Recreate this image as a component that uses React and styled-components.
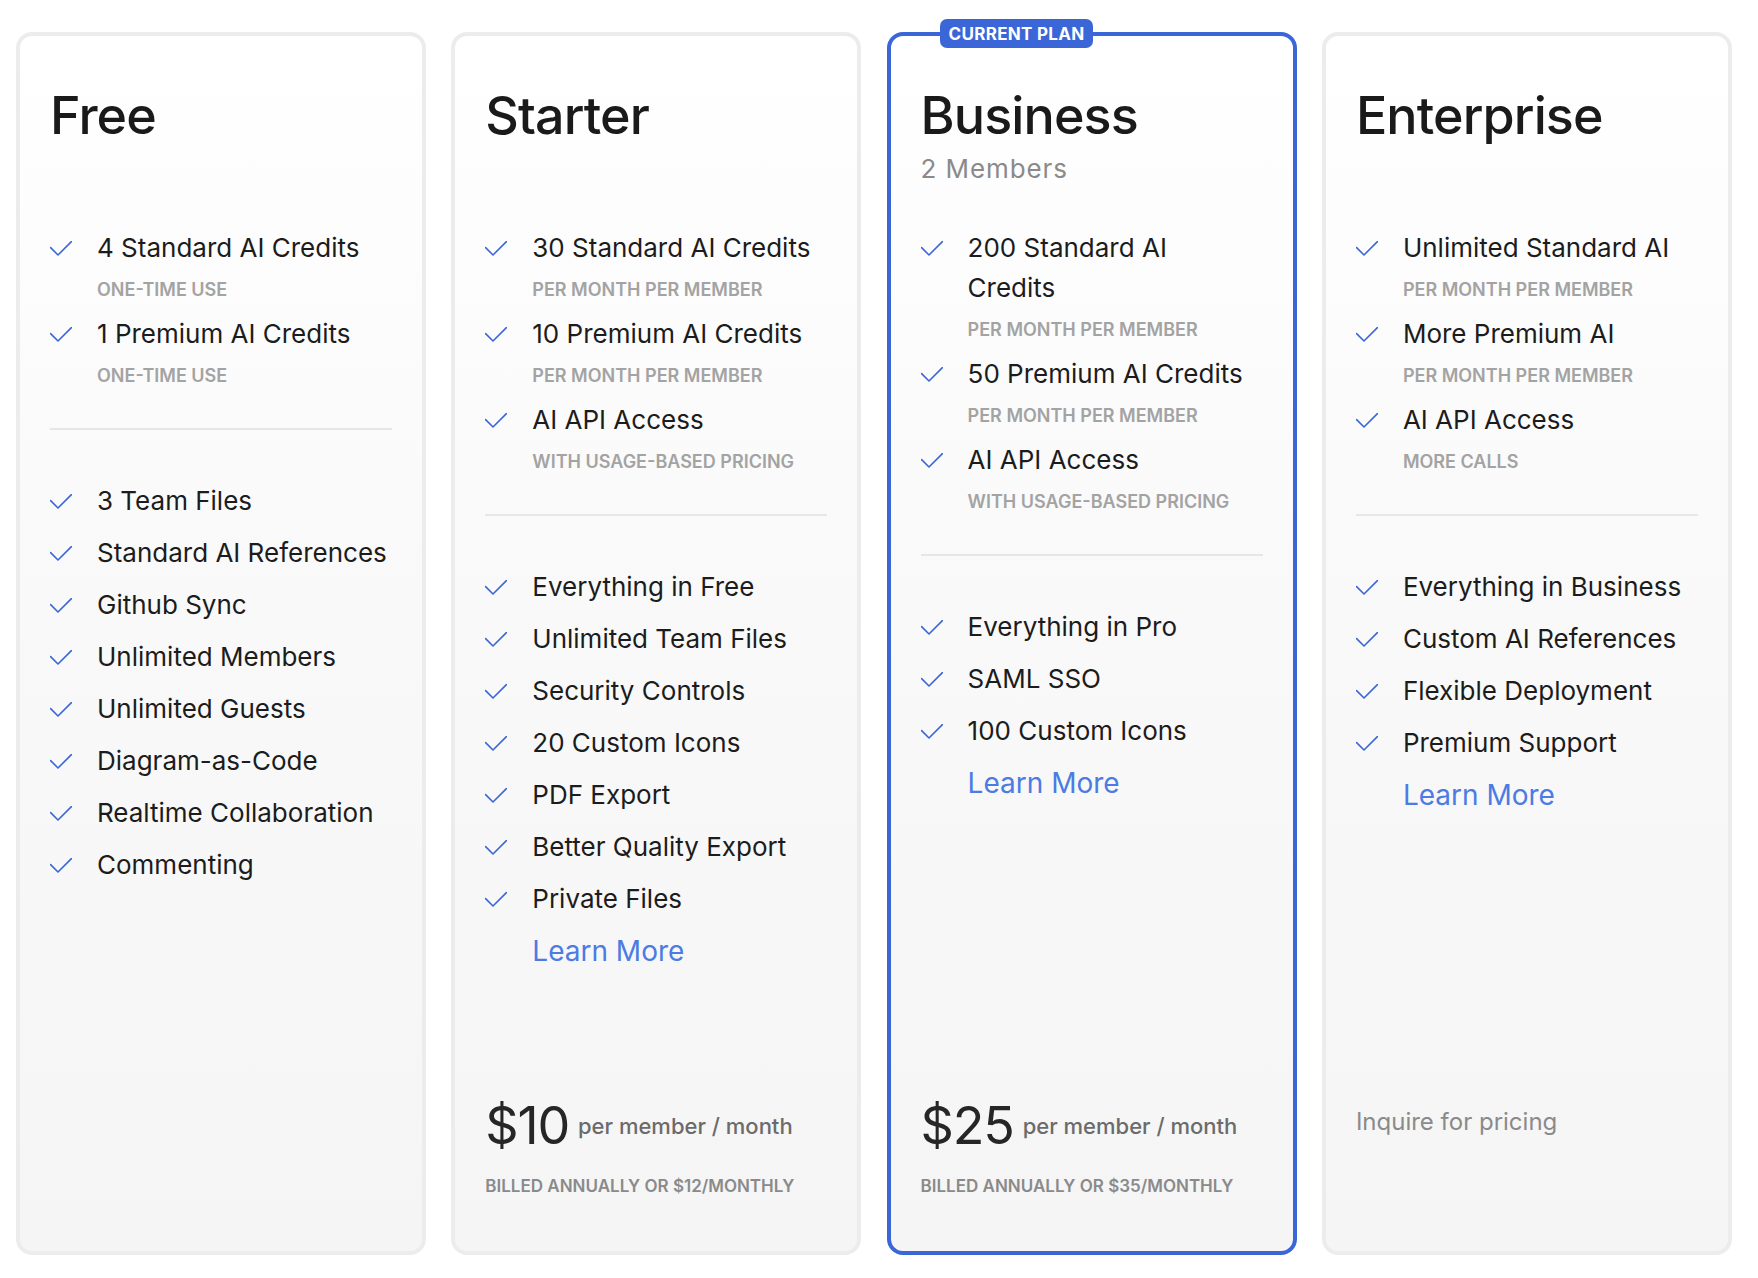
import styled, { createGlobalStyle } from 'styled-components';

const PLANS = [
  {
    id: 'free',
    name: 'Free',
    credits: [
      { text: '4 Standard AI Credits', note: 'One-time use' },
      { text: '1 Premium AI Credits', note: 'One-time use' },
    ],
    features: [
      '3 Team Files',
      'Standard AI References',
      'Github Sync',
      'Unlimited Members',
      'Unlimited Guests',
      'Diagram-as-Code',
      'Realtime Collaboration',
      'Commenting',
    ],
  },
  {
    id: 'starter',
    name: 'Starter',
    credits: [
      { text: '30 Standard AI Credits', note: 'Per month per member' },
      { text: '10 Premium AI Credits', note: 'Per month per member' },
      { text: 'AI API Access', note: 'With usage-based pricing' },
    ],
    features: [
      'Everything in Free',
      'Unlimited Team Files',
      'Security Controls',
      '20 Custom Icons',
      'PDF Export',
      'Better Quality Export',
      'Private Files',
    ],
    learnMore: true,
    price: '$10',
    billed: 'Billed annually or $12/monthly',
  },
  {
    id: 'business',
    name: 'Business',
    members: '2 Members',
    current: true,
    credits: [
      { text: '200 Standard AI Credits', note: 'Per month per member' },
      { text: '50 Premium AI Credits', note: 'Per month per member' },
      { text: 'AI API Access', note: 'With usage-based pricing' },
    ],
    features: ['Everything in Pro', 'SAML SSO', '100 Custom Icons'],
    learnMore: true,
    price: '$25',
    billed: 'Billed annually or $35/monthly',
  },
  {
    id: 'enterprise',
    name: 'Enterprise',
    credits: [
      { text: 'Unlimited Standard AI', note: 'Per month per member' },
      { text: 'More Premium AI', note: 'Per month per member' },
      { text: 'AI API Access', note: 'More calls' },
    ],
    features: [
      'Everything in Business',
      'Custom AI References',
      'Flexible Deployment',
      'Premium Support',
    ],
    learnMore: true,
    inquire: 'Inquire for pricing',
  },
];

const Check = () => (
  <S.CheckIcon viewBox="0 0 22 15" aria-hidden="true">
    <path d="M0.6 6.6 L8 14 L21.4 0.6" />
  </S.CheckIcon>
);

const Feature = ({ text, note }) => (
  <S.Item>
    <Check />
    <S.ItemBody>
      <S.ItemText>{text}</S.ItemText>
      {note && <S.Note>{note}</S.Note>}
    </S.ItemBody>
  </S.Item>
);

const PlanCard = ({ plan }) => (
  <S.Card $current={plan.current}>
    {plan.current && <S.Badge>Current Plan</S.Badge>}
    <S.Header>
      <S.Title>{plan.name}</S.Title>
      {plan.members && <S.Members>{plan.members}</S.Members>}
    </S.Header>
    <S.List>
      {plan.credits.map((c) => (
        <Feature key={c.text} text={c.text} note={c.note} />
      ))}
    </S.List>
    <S.Divider />
    <S.List>
      {plan.features.map((f) => (
        <Feature key={f} text={f} />
      ))}
      {plan.learnMore && <S.LearnMore href="#">Learn More</S.LearnMore>}
    </S.List>
    <S.Footer>
      <S.PriceRow>
        {plan.price ? (
          <>
            <S.Price>{plan.price}</S.Price>
            <S.Per>per member / month</S.Per>
          </>
        ) : (
          plan.inquire && <S.Inquire>{plan.inquire}</S.Inquire>
        )}
      </S.PriceRow>
      {plan.billed && <S.Billed>{plan.billed}</S.Billed>}
    </S.Footer>
  </S.Card>
);

const App = () => (
  <>
    <GlobalStyle />
    <S.Page>
      {PLANS.map((plan) => (
        <PlanCard key={plan.id} plan={plan} />
      ))}
    </S.Page>
  </>
);

export default App;

const GlobalStyle = createGlobalStyle`
  body {
    margin: 0;
    background: #ffffff;
    font-family: Inter, 'Noto Sans', 'Liberation Sans', sans-serif;
    color: #1c1c1c;
  }
`;

const S = {
  Page: styled.div`
    display: grid;
    grid-template-columns: repeat(4, 410px);
    column-gap: 25.3px;
    padding: 32px 0 0 16px;
  `,
  Card: styled.div`
    position: relative;
    box-sizing: border-box;
    height: 1223px;
    display: flex;
    flex-direction: column;
    padding: 49px 30px 53px 30px;
    border: 4px solid ${(p) => (p.$current ? '#3a66d8' : '#ececec')};
    border-radius: 16px;
    background: linear-gradient(180deg, #ffffff 0%, #f9f9f9 45%, #f5f5f5 100%);
  `,
  Badge: styled.div`
    position: absolute;
    top: -17px;
    left: 49px;
    height: 29px;
    padding: 0 9px;
    display: flex;
    align-items: center;
    border-radius: 7px;
    background: #3a66d8;
    color: #ffffff;
    font-size: 17px;
    font-weight: 700;
    letter-spacing: 0.3px;
    text-transform: uppercase;
  `,
  Header: styled.div`
    height: 143px;
    display: flex;
    flex-direction: column;
  `,
  Title: styled.h2`
    margin: 0;
    font-size: 52px;
    line-height: 62px;
    font-weight: 500;
    color: #1a1a1a;
    letter-spacing: -0.9px;
  `,
  Members: styled.div`
    margin-top: 3px;
    font-size: 26px;
    line-height: 37px;
    letter-spacing: 0.9px;
    color: #8a8a8a;
  `,
  List: styled.div`
    display: flex;
    flex-direction: column;
    gap: 12px;
  `,
  Item: styled.div`
    display: flex;
    align-items: flex-start;
    gap: 25px;
  `,
  CheckIcon: styled.svg`
    flex: none;
    width: 22px;
    height: 15px;
    margin-top: 13px;
    fill: none;
    stroke: #3a66d8;
    stroke-width: 1.6;
    stroke-linecap: round;
    stroke-linejoin: round;
  `,
  ItemBody: styled.div`
    display: flex;
    flex-direction: column;
  `,
  ItemText: styled.div`
    max-width: 291px;
    font-size: 26px;
    line-height: 40px;
    color: #1c1c1c;
  `,
  Note: styled.div`
    margin-top: 10px;
    font-size: 18px;
    line-height: 24px;
    font-weight: 600;
    color: #a3a3a3;
    text-transform: uppercase;
  `,
  Divider: styled.div`
    height: 2px;
    margin: 40px 0 51px;
    background: #e6e6e6;
  `,
  LearnMore: styled.a`
    margin-left: 47px;
    font-size: 28px;
    line-height: 40px;
    color: #4b7be3;
    text-decoration: none;
  `,
  Footer: styled.div`
    margin-top: auto;
    height: 103px;
    display: flex;
    flex-direction: column;
  `,
  PriceRow: styled.div`
    height: 62px;
    display: flex;
    align-items: center;
    gap: 9px;
  `,
  Price: styled.span`
    font-size: 52px;
    line-height: 62px;
    color: #262626;
    letter-spacing: -1.2px;
  `,
  Per: styled.span`
    font-size: 22px;
    font-weight: 500;
    color: #6b6b6b;
  `,
  Inquire: styled.span`
    margin-bottom: 10px;
    font-size: 24px;
    color: #8a8a8a;
  `,
  Billed: styled.div`
    margin-top: 17px;
    font-size: 17px;
    line-height: 24px;
    font-weight: 600;
    color: #8a8a8a;
    text-transform: uppercase;
  `,
};
